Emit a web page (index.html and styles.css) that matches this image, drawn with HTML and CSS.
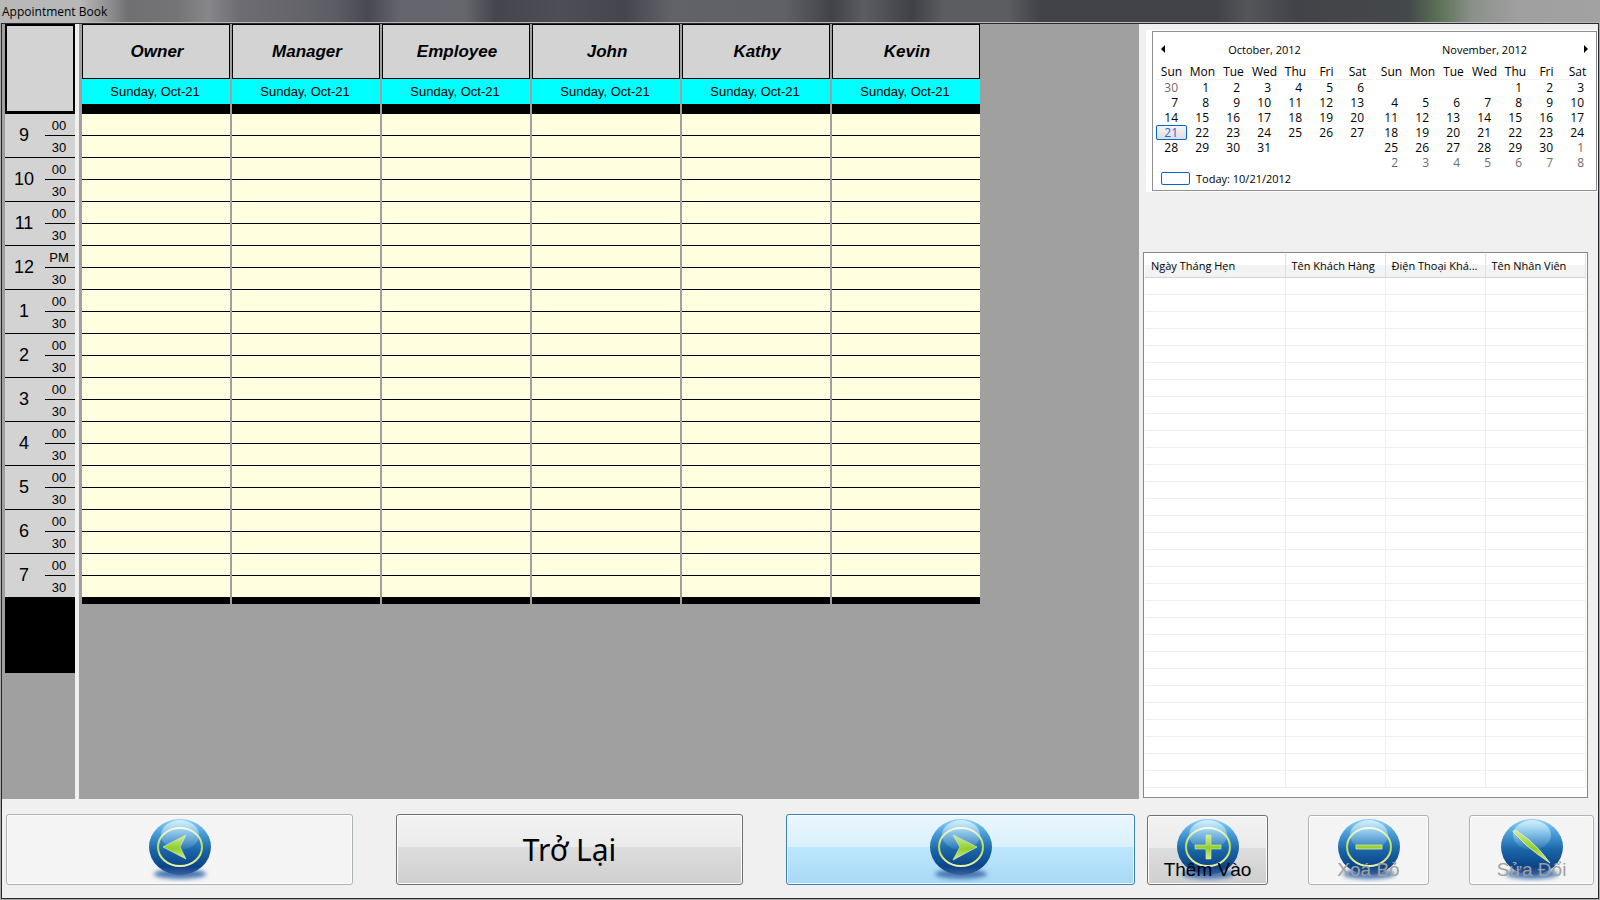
FILE: index.html
```html
<!DOCTYPE html>
<html lang="vi">
<head>
<meta charset="UTF-8">
<meta name="viewport" content="width=device-width, initial-scale=1.0">
<title>Appointment Book</title>
<link rel="stylesheet" href="styles.css">
</head>
<body>
<svg class="defs" width="0" height="0">
	<defs>
		<linearGradient id="ball" x1="0" y1="0" x2="0" y2="1">
			<stop offset="0" stop-color="#8fd2f7"/>
			<stop offset=".25" stop-color="#4a9fd9"/>
			<stop offset=".55" stop-color="#1a66a8"/>
			<stop offset=".85" stop-color="#0b4488"/>
			<stop offset="1" stop-color="#3f5f9c"/>
		</linearGradient>
		<linearGradient id="shine" x1="0" y1="0" x2="0" y2="1">
			<stop offset="0" stop-color="#d6f1ff" stop-opacity=".95"/>
			<stop offset=".5" stop-color="#b5dbf2" stop-opacity=".5"/>
			<stop offset="1" stop-color="#9cc9e8" stop-opacity=".1"/>
		</linearGradient>
		<linearGradient id="ring" x1="0" y1="0" x2="0" y2="1">
			<stop offset="0" stop-color="#f6fbe4"/>
			<stop offset=".5" stop-color="#b9dc4c"/>
			<stop offset="1" stop-color="#e9f3a8"/>
		</linearGradient>
		<linearGradient id="lime" x1="0" y1="0" x2="0" y2="1">
			<stop offset="0" stop-color="#d5eba0"/>
			<stop offset=".55" stop-color="#8fcf2a"/>
			<stop offset="1" stop-color="#d3ea8c"/>
		</linearGradient>
		<filter id="soft" x="-20%" y="-60%" width="140%" height="220%"><feGaussianBlur stdDeviation="2"/></filter>
		<g id="orb">
			<ellipse cx="32" cy="56" rx="26" ry="5" fill="#4a78b4" filter="url(#soft)"/>
			<ellipse cx="32" cy="29" rx="31" ry="28" fill="url(#ball)"/>
			<ellipse cx="32" cy="17" rx="19" ry="15" fill="url(#shine)"/>
		</g>
		<g id="orb-ring">
			<use href="#orb"/>
			<ellipse cx="32" cy="29" rx="22" ry="19" fill="none" stroke="url(#ring)" stroke-width="2"/>
		</g>
	</defs>
</svg>
<div class="window">
	<h1 class="titlebar">Appointment Book</h1>
	<div class="main">
		<div class="book">
			<div class="hours" id="hours"></div>
			<div class="schedule" id="schedule"></div>
		</div>
		<div class="side">
			<div class="calendar">
				<div class="calendar-inner">
					<div class="months" id="months"></div>
					<p class="today"><span class="today-box"></span>Today: 10/21/2012</p>
				</div>
			</div>
			<div class="list">
				<table class="list-table">
					<thead>
						<tr>
							<th class="col-date">Ngày Tháng Hẹn</th>
							<th>Tên Khách Hàng</th>
							<th>Điện Thoại Khá...</th>
							<th>Tên Nhân Viên</th>
						</tr>
					</thead>
					<tbody id="list"></tbody>
				</table>
			</div>
		</div>
	</div>
	<div class="toolbar">
		<div class="nav">
			<button class="btn btn-off" type="button" aria-label="Prev" disabled>
				<svg width="64" height="64"><use href="#orb-ring"/><path d="M15 29 L38 17 L32 29 L38 41 Z" fill="url(#lime)" stroke="#e8f5c0" stroke-width=".6"/></svg>
			</button>
			<button class="btn btn-back" type="button">Trở Lại</button>
			<button class="btn btn-hot" type="button" aria-label="Next">
				<svg width="64" height="64"><use href="#orb-ring"/><path d="M48 29 L24 17 L31 29 L24 42 Z" fill="url(#lime)" stroke="#e8f5c0" stroke-width=".6"/></svg>
			</button>
		</div>
		<div class="actions">
			<button class="btn" type="button">
				<svg width="64" height="64"><use href="#orb-ring"/><path d="M30 17h5v10h10v4h-10v10h-5v-10h-11v-4h11z" fill="url(#lime)" stroke="#d8ecaa" stroke-width=".6"/></svg>
				<span class="caption">Thêm Vào</span>
			</button>
			<button class="btn btn-off" type="button" disabled>
				<svg width="64" height="64"><use href="#orb-ring"/><path d="M19 27h26v4h-26z" fill="#9ad12f" stroke="#d8ecaa" stroke-width=".8"/></svg>
				<span class="caption">Xoá Bỏ</span>
			</button>
			<button class="btn btn-off btn-edit" type="button" disabled>
				<svg width="64" height="64"><use href="#orb"/><path d="M13 14 Q13 11 17 13 L28 21 Q40 31 50 45 Q38 37 26 27 Z" fill="url(#lime)" stroke="#e8f5c0" stroke-width=".8"/></svg>
				<span class="caption">Sửa Đổi</span>
			</button>
		</div>
	</div>
</div>
<script src="script.js"></script>
</body>
</html>
```
FILE: styles.css
```css
* {
	box-sizing: border-box;
	margin: 0;
	padding: 0;
}
body {
	font-family: "Open Sans", "Noto Sans", sans-serif;
	font-size: 12px;
	color: #000;
	background: #9a9a9a;
}
.defs {
	position: absolute;
}
.window {
	display: flex;
	flex-direction: column;
	min-height: 100vh;
	padding: 0 1px 1px;
	background: #a9a9a9;
}
.titlebar {
	height: 23px;
	margin: 0 -1px;
	padding-left: 2px;
	border-bottom: 1px solid #b8b8b8;
	font-size: 12px;
	font-weight: normal;
	line-height: 23px;
	background: linear-gradient(90deg, #b8b8b8 0, #b8b8b8 5%, #8a8a8c 7%, #707072 8%, #747476 11%, #87878a 13%, #6c6c72 15%, #66666c 18%, #5c5c64 21%, #484952 23%, #64656d 25%, #66666d 29%, #45464d 31%, #4e4f56 35%, #45464d 39%, #626369 42%, #606167 49%, #424349 52%, #5c5d62 54%, #404146 57%, #5c5d61 59%, #5c5d61 63%, #424348 65%, #424348 76%, #55565a 78%, #424348 81%, #45484a 88%, #5c7357 90%, #8b908a 92%, #a0a0a0 95%, #a2a2a2 100%);
}
.main {
	display: flex;
	flex: 1;
	border: 1px solid #26292e;
	border-bottom: none;
	background: #f0f0f0;
}

/* appointment grid */
.book {
	display: flex;
	flex: 1;
	gap: 4px;
}
.hours {
	width: 73px;
	padding-left: 3px;
	background: #a0a0a0;
	font-family: "Liberation Sans", Arial, sans-serif;
}
.corner {
	height: 90px;
	border: 2px solid #000;
	border-bottom-width: 3px;
	background: #d3d3d3;
}
.hour {
	display: grid;
	grid-template-columns: 40px 30px;
	height: 44px;
	border-bottom: 1px solid #000;
	background: #d3d3d3;
}
.hour b {
	grid-row: span 2;
	padding-right: 2px;
	font-size: 18px;
	font-weight: normal;
	line-height: 43px;
	text-align: center;
}
.hour span {
	height: 22px;
	font-size: 13px;
	line-height: 24px;
	padding-right: 2px;
	text-align: center;
}
.hour .half {
	border-bottom: 1px solid #000;
}
.hours-end {
	height: 75px;
	background: #000;
}
.schedule {
	display: flex;
	flex: 1;
	gap: 2px;
	padding-left: 3px;
	background: #a0a0a0;
	font-family: "Liberation Sans", Arial, sans-serif;
}
.person {
	width: 148px;
}
.person h2 {
	height: 55px;
	padding-left: 2px;
	border: 1px solid #000;
	background: #d3d3d3;
	font-size: 17px;
	font-style: italic;
	line-height: 53px;
	text-align: center;
}
.person p {
	height: 25px;
	padding-right: 2px;
	background: #0ff;
	font-size: 13px;
	line-height: 25px;
	text-align: center;
}
.slots {
	border-top: 10px solid #000;
	border-bottom: 6px solid #000;
	list-style: none;
}
.slots li {
	height: 22px;
	border-bottom: 1px solid #000;
	background: #ffffe0;
}

/* right panel */
.side {
	display: flex;
	flex-direction: column;
	gap: 60px;
	width: 459px;
	padding-top: 6px;
}
.calendar {
	margin-left: 7px;
	padding: 1px 1px 1px 6px;
	background: #fff;
}
.calendar-inner {
	height: 160px;
	padding: 0 3px;
	border: 1px solid #8e8f8f;
}
.months {
	display: flex;
	gap: 3px;
	height: 137px;
}
.month {
	flex: 1;
}
.month-head {
	display: flex;
	justify-content: space-between;
	align-items: center;
	height: 34px;
	padding: 0 5px;
	font-size: 11px;
}
.arrow {
	width: 4px;
	border: none;
	background: none;
}
.arrow svg {
	display: block;
}
.days {
	width: 100%;
	border-collapse: collapse;
	table-layout: fixed;
}
.days th {
	height: 14px;
	font-weight: normal;
	line-height: 12px;
	text-align: center;
	vertical-align: top;
	box-shadow: inset 0 -1px 0 #f3f3f3;
}
.days td {
	height: 15px;
	padding-right: 9px;
	line-height: 15px;
	text-align: right;
}
.days .other {
	color: #6d6d6d;
}
.days .picked {
	border-radius: 2px;
	box-shadow: inset 0 0 0 1px #0066cc;
	background: linear-gradient(#f6f6f6, #dcdcdc);
	color: #2a66cc;
}
.today {
	display: flex;
	align-items: center;
	gap: 6px;
	height: 18px;
	padding-left: 5px;
	font-size: 11px;
}
.today-box {
	width: 29px;
	height: 13px;
	border: 1px solid #0066cc;
	border-radius: 2px;
}
.list {
	width: 445px;
	margin-left: 4px;
	padding: 1px 3px 9px 1px;
	border: 1px solid #828790;
	background: #fff;
}
.list-table {
	width: 100%;
	border-collapse: collapse;
	table-layout: fixed;
}
.list-table th {
	width: 100px;
	height: 23px;
	padding-left: 6px;
	border-right: 1px solid #dfe0e2;
	border-bottom: 1px solid #d5d5d5;
	background: linear-gradient(#fff 45%, #f3f4f6 50%, #f1f2f4);
	font-size: 11px;
	font-weight: normal;
	text-align: left;
	white-space: nowrap;
}
.list-table .col-date {
	width: 140px;
}
.list-table td {
	height: 17px;
	border-right: 1px solid #f0f0f0;
	border-bottom: 1px solid #f0f0f0;
}

/* bottom buttons */
.toolbar {
	display: flex;
	gap: 12px;
	padding: 15px 4px 13px;
	border: 1px solid #26292e;
	border-top: none;
	background: #f0f0f0;
}
.nav {
	display: flex;
	flex: 1;
	justify-content: space-between;
}
.nav .btn {
	width: 347px;
	height: 71px;
}
.nav .btn-hot {
	width: 349px;
}
.actions {
	display: flex;
	align-items: flex-end;
	justify-content: space-between;
	width: 447px;
}
.actions .btn {
	width: 121px;
	height: 70px;
}
.actions .btn-edit {
	width: 125px;
}
.btn {
	position: relative;
	border: 1px solid #707070;
	border-radius: 3px;
	box-shadow: inset 0 0 0 1px #fcfcfc;
	background: linear-gradient(#f2f2f2, #ebebeb 47%, #dddddd 47%, #cfcfcf);
	font-family: "Liberation Sans", Arial, sans-serif;
	font-size: 19px;
	color: #000;
}
.btn svg {
	display: block;
	margin: 0 auto;
}
.btn-off {
	border-color: #adb2b5;
	background: #f4f4f4;
	color: #a0a0a0;
}
.btn-hot {
	border-color: #3c7fb1;
	background: linear-gradient(#eaf6fd, #d9f0fc 47%, #bee6fd 47%, #a7d9f5);
}
.btn-back {
	font-family: "Noto Sans", "Open Sans", sans-serif;
	font-size: 30px;
}
.caption {
	position: absolute;
	right: 0;
	bottom: 2px;
	left: 0;
	line-height: 24px;
}
```
FILE: script.js
```js
;(function(doc){
	// time column
	var hours = ['9','10','11','12','1','2','3','4','5','6','7'];
	var html = '<div class="corner"></div>';
	for (var i = 0; i < hours.length; i++) {
		html += '<div class="hour"><b>' + hours[i] + '</b><span class="half">' + (hours[i] === '12' ? 'PM' : '00') + '</span><span>30</span></div>';
	}
	doc.getElementById('hours').innerHTML = html + '<div class="hours-end"></div>';

	// one column per employee, two slots per hour
	var people = ['Owner','Manager','Employee','John','Kathy','Kevin'];
	html = '';
	for (i = 0; i < people.length; i++) {
		html += '<div class="person"><h2>' + people[i] + '</h2><p>Sunday, Oct-21</p><ul class="slots">';
		for (var j = 0; j < hours.length * 2; j++) {
			html += '<li></li>';
		}
		html += '</ul></div>';
	}
	doc.getElementById('schedule').innerHTML = html;

	// before/after: days shown from the neighbouring months
	function month(title, offset, before, count, after, picked, arrow){
		var names = ['Sun','Mon','Tue','Wed','Thu','Fri','Sat'];
		var left = '<button class="arrow" type="button" aria-label="Previous month"><svg width="4" height="8"><path d="M4 0v8L0 4z"/></svg></button>';
		var right = '<button class="arrow" type="button" aria-label="Next month"><svg width="4" height="8"><path d="M0 0v8l4-4z"/></svg></button>';
		var blank = '<span class="arrow"></span>';
		var cells = [], k;
		for (k = 0; k < offset; k++) cells.push('<td class="other">' + (before[k] || '') + '</td>');
		for (k = 1; k <= count; k++) cells.push('<td' + (k === picked ? ' class="picked"' : '') + '>' + k + '</td>');
		for (k = 1; k <= after; k++) cells.push('<td class="other">' + k + '</td>');
		var out = '<div class="month"><div class="month-head">' + (arrow === 'left' ? left : blank) + '<span>' + title + '</span>' + (arrow === 'right' ? right : blank) + '</div>';
		out += '<table class="days"><thead><tr><th>' + names.join('</th><th>') + '</th></tr></thead><tbody>';
		for (k = 0; k < cells.length; k += 7) {
			out += '<tr>' + cells.slice(k, k + 7).join('') + '</tr>';
		}
		return out + '</tbody></table></div>';
	}
	doc.getElementById('months').innerHTML =
		month('October, 2012', 1, ['30'], 31, 0, 21, 'left') +
		month('November, 2012', 4, [], 30, 8, 0, 'right');

	// empty rows of the list
	html = '';
	for (i = 0; i < 30; i++) {
		html += '<tr><td></td><td></td><td></td><td></td></tr>';
	}
	doc.getElementById('list').innerHTML = html;
})(document)
```
